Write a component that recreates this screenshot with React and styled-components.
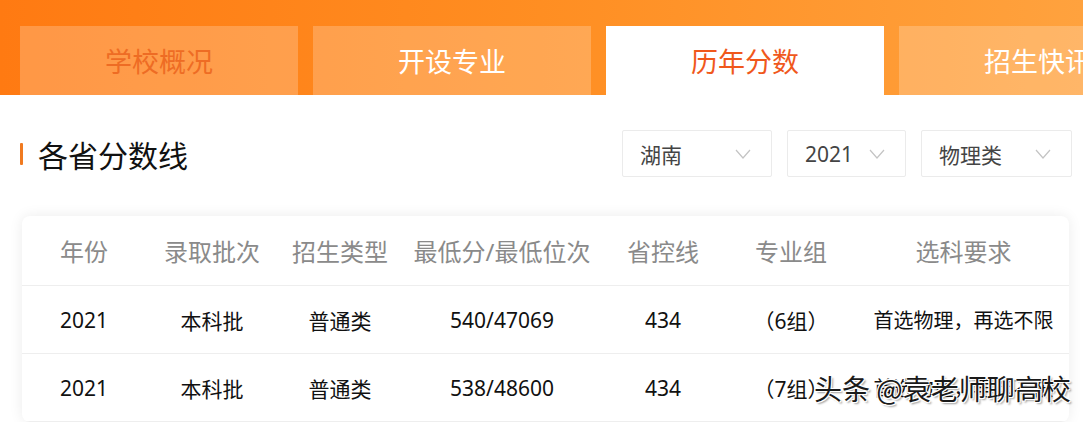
import React from "react";
import styled, { createGlobalStyle } from "styled-components";

const Global = createGlobalStyle`
  html, body { margin: 0; padding: 0; background: #fff; }
  body { font-family: "Noto Sans", "Noto Sans CJK SC", sans-serif; overflow: hidden; }
`;

const Page = styled.div`
  position: relative;
  width: 1083px;
  height: 422px;
  overflow: hidden;
  background: #fff;
`;

const TabBar = styled.div`
  display: flex;
  gap: 15px;
  height: 95px;
  padding: 26px 0 0 20px;
  box-sizing: border-box;
  background: linear-gradient(90deg, #ff7a12 0%, #ff8e22 50%, #ffa23e 100%);
  overflow: hidden;
`;

const Tab = styled.div`
  flex: 0 0 278px;
  height: 69px;
  display: flex;
  align-items: center;
  justify-content: center;
  font-size: 27px;
  font-family: "Noto Sans CJK SC", sans-serif;
  background: ${p => (p.$active ? "#fff" : "rgba(255,255,255,0.22)")};
  color: ${p => p.$color};
`;

const TitleRow = styled.div`
  display: flex;
  align-items: center;
  justify-content: space-between;
  margin-top: 35px;
  padding: 0 11px 0 20px;
  height: 47px;
`;

const Title = styled.h2`
  margin: 0;
  display: flex;
  align-items: center;
  gap: 15px;
  font-size: 30px;
  font-weight: 400;
  color: #111;
  font-family: "Noto Sans CJK SC", sans-serif;
  &::before {
    content: "";
    width: 3px;
    height: 22px;
    background: #f07a20;
    border-radius: 1px;
  }
`;

const Filters = styled.div`
  display: flex;
  gap: 15px;
`;

const Select = styled.div`
  width: ${p => p.$w}px;
  height: 47px;
  box-sizing: border-box;
  border: 1px solid #ebebeb;
  border-radius: 2px;
  display: flex;
  align-items: center;
  justify-content: space-between;
  padding: 0 20px 0 17px;
  font-size: 21px;
  color: #444;
  font-family: "Noto Sans", "Noto Sans CJK SC", sans-serif;
`;

const Chevron = () => (
  <svg width="16" height="10" viewBox="0 0 16 10" fill="none">
    <path d="M1 1l7 8 7-8" stroke="#c4c4c4" strokeWidth="1.2" />
  </svg>
);

const Card = styled.div`
  margin: 39px 0 0 22px;
  width: 1047px;
  background: #fff;
  border-radius: 8px;
  box-shadow: 0 0 14px rgba(0,0,0,0.08);
  overflow: hidden;
`;

const cols = "124px 132px 124px 200px 122px 134px 211px";

const Row = styled.div`
  display: grid;
  grid-template-columns: ${cols};
  height: ${p => (p.$head ? 70 : 68)}px;
  align-items: center;
  border-bottom: 1px solid #eeeeee;
  box-sizing: border-box;
`;

const Cell = styled.div`
  text-align: center;
  white-space: nowrap;
  font-family: "Noto Sans", "Noto Sans CJK SC", sans-serif;
  font-size: ${p => (p.$head ? 24 : 21)}px;
  color: ${p => (p.$head ? "#8a8a8a" : "#111")};
  ${p => p.$small && "font-size: 20px;"}
`;

const Watermark = styled.div`
  position: absolute;
  left: 814px;
  top: 368px;
  font-size: 28px;
  font-family: "Noto Sans CJK SC", sans-serif;
  color: #1a1a1a;
  white-space: nowrap;
  text-shadow: 1px 1px 0 #fff, -1px -1px 0 #fff, 1px -1px 0 #fff, -1px 1px 0 #fff, 2px 2px 2px rgba(0,0,0,0.4);
`;

const tabs = [
  { t: "学校概况", c: "#ee6c24" },
  { t: "开设专业", c: "#fff" },
  { t: "历年分数", c: "#f0581c", a: true },
  { t: "招生快讯", c: "#fff" },
];

const head = ["年份", "录取批次", "招生类型", "最低分/最低位次", "省控线", "专业组", "选科要求"];
const rows = [
  ["2021", "本科批", "普通类", "540/47069", "434", "（6组）", "首选物理，再选不限"],
  ["2021", "本科批", "普通类", "538/48600", "434", "（7组）", "首选物理，再选不限"],
];

export default function App() {
  return (
    <Page>
      <Global />
      <TabBar>
        {tabs.map(x => (
          <Tab key={x.t} $active={x.a} $color={x.c}>{x.t}</Tab>
        ))}
      </TabBar>
      <TitleRow>
        <Title>各省分数线</Title>
        <Filters>
          <Select $w={150}>湖南<Chevron /></Select>
          <Select $w={119}>2021<Chevron /></Select>
          <Select $w={151}>物理类<Chevron /></Select>
        </Filters>
      </TitleRow>
      <Card>
        <Row $head>
          {head.map(h => <Cell key={h} $head>{h}</Cell>)}
        </Row>
        {rows.map((r, i) => (
          <Row key={i}>
            {r.map((c, j) => <Cell key={j} $small={j === 6}>{c}</Cell>)}
          </Row>
        ))}
      </Card>
      <Watermark>头条 @袁老师聊高校</Watermark>
    </Page>
  );
}
